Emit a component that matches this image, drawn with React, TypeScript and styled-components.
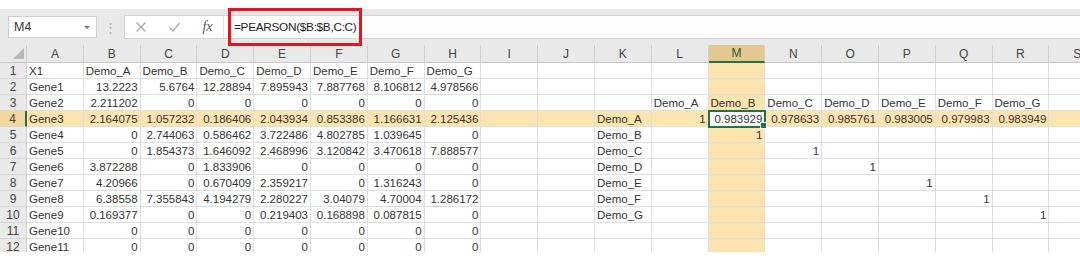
import React from "react";
import styled, { createGlobalStyle, css } from "styled-components";

const GlobalStyle = createGlobalStyle`
  html, body {
    margin: 0;
    padding: 0;
    background: #fff;
  }
  body {
    font-family: "Liberation Sans", "Noto Sans CJK SC", Arial, sans-serif;
  }
`;

const Page = styled.div`
  position: relative;
  width: 1080px;
  height: 265px;
  padding-top: 9px;
  box-sizing: border-box;
  overflow: hidden;
  background: #fff;
`;

const FormulaBar = styled.div`
  display: flex;
  align-items: center;
  height: 36px;
  padding-left: 8px;
  box-sizing: border-box;
  background: #e9e9e9;
`;

const NameBox = styled.div`
  display: flex;
  align-items: center;
  justify-content: space-between;
  width: 89px;
  height: 22px;
  padding: 0 6px 0 5px;
  box-sizing: border-box;
  background: #fff;
  border: 1px solid #cfcfcf;
  font-size: 12.5px;
  color: #333;
`;

const Caret = styled.span`
  width: 0;
  height: 0;
  border-left: 3px solid transparent;
  border-right: 3px solid transparent;
  border-top: 3px solid #777;
`;

const Grip = styled.div`
  width: 27px;
  text-align: center;
  color: #b4b4b4;
  font-size: 13px;
`;

const FormulaBox = styled.div`
  flex: 1;
  display: flex;
  align-items: stretch;
  height: 22px;
  background: #fdfdfd;
  border: 1px solid #d3d3d3;
  border-right: none;
`;

const IconGroup = styled.div`
  display: flex;
  align-items: center;
  justify-content: space-around;
  width: 98px;
  background: #fff;
  border-right: 1px solid #e2e2e2;
`;

const Fx = styled.span`
  font-family: "Liberation Serif", "Times New Roman", serif;
  font-style: italic;
  font-size: 14px;
  color: #555;
`;

const FormulaText = styled.div`
  display: flex;
  align-items: center;
  padding-left: 10px;
  font-size: 11.8px;
  letter-spacing: -0.3px;
  color: #222;
`;

const Callout = styled.div`
  position: absolute;
  left: 228px;
  top: 8px;
  width: 134px;
  height: 38px;
  box-sizing: border-box;
  border: 3px solid #e8141b;
  pointer-events: none;
`;

const Sheet = styled.div`
  display: grid;
  grid-template-columns: 27px repeat(19, 56.8px);
  grid-template-rows: 18px;
  grid-auto-rows: 16px;
  height: 207px;
  overflow: hidden;
  font-size: 11.5px;
  color: #333;
`;

const Corner = styled.div`
  display: flex;
  align-items: flex-end;
  justify-content: flex-end;
  padding: 0 2px 3px 0;
  background: #e9e9e9;
  border-right: 1px solid #d0d0d0;
  border-bottom: 1px solid #c8c8c8;
`;

const ColHead = styled.div<{ $active?: boolean }>`
  display: flex;
  align-items: center;
  justify-content: center;
  box-sizing: border-box;
  background: #e9e9e9;
  border-right: 1px solid #d0d0d0;
  border-bottom: 1px solid #c8c8c8;
  font-size: 12px;
  color: #444;
  ${({ $active }) =>
    $active &&
    css`
      background: #e5c88d;
      border-bottom: 2px solid #217346;
      color: #2c5a3b;
    `}
`;

const RowHead = styled.div<{ $active?: boolean }>`
  display: flex;
  align-items: center;
  justify-content: center;
  box-sizing: border-box;
  background: #e9e9e9;
  border-right: 1px solid #d0d0d0;
  border-bottom: 1px solid #d6d6d6;
  font-size: 12px;
  color: #444;
  ${({ $active }) =>
    $active &&
    css`
      background: #f4d79d;
      border-right: 2px solid #217346;
    `}
`;

const Cell = styled.div<{ $num?: boolean; $hl?: boolean; $selected?: boolean }>`
  position: relative;
  display: flex;
  align-items: center;
  justify-content: ${({ $num }) => ($num ? "flex-end" : "flex-start")};
  padding: 0 2px;
  box-sizing: border-box;
  white-space: nowrap;
  overflow: visible;
  background: ${({ $hl }) => ($hl ? "#fde3ae" : "#fff")};
  border-right: 1px solid #dedede;
  border-bottom: 1px solid #dedede;
  ${({ $selected }) =>
    $selected &&
    css`
      z-index: 1;
      background: #fff;
      outline: 2px solid #217346;
      outline-offset: -1px;
      &::after {
        content: "";
        position: absolute;
        right: -3px;
        bottom: -3px;
        width: 5px;
        height: 5px;
        background: #217346;
        border: 1px solid #fff;
      }
    `}
`;

const COLS = "ABCDEFGHIJKLMNOPQRS".split("");
const ACTIVE_COL = "M";
const ACTIVE_ROW = 4;

const demos = ["Demo_A", "Demo_B", "Demo_C", "Demo_D", "Demo_E", "Demo_F", "Demo_G"];

const genes: string[][] = [
  ["X1", ...demos],
  ["Gene1", "13.2223", "5.6764", "12.28894", "7.895943", "7.887768", "8.106812", "4.978566"],
  ["Gene2", "2.211202", "0", "0", "0", "0", "0", "0"],
  ["Gene3", "2.164075", "1.057232", "0.186406", "2.043934", "0.853386", "1.166631", "2.125436"],
  ["Gene4", "0", "2.744063", "0.586462", "3.722486", "4.802785", "1.039645", "0"],
  ["Gene5", "0", "1.854373", "1.646092", "2.468996", "3.120842", "3.470618", "7.888577"],
  ["Gene6", "3.872288", "0", "1.833906", "0", "0", "0", "0"],
  ["Gene7", "4.20966", "0", "0.670409", "2.359217", "0", "1.316243", "0"],
  ["Gene8", "6.38558", "7.355843", "4.194279", "2.280227", "3.04079", "4.70004", "1.286172"],
  ["Gene9", "0.169377", "0", "0", "0.219403", "0.168898", "0.087815", "0"],
  ["Gene10", "0", "0", "0", "0", "0", "0", "0"],
  ["Gene11", "0", "0", "0", "0", "0", "0", "0"],
];

const corr = ["1", "0.983929", "0.978633", "0.985761", "0.983005", "0.979983", "0.983949"];

const buildRows = () => {
  const rows: Record<string, string>[] = genes.map((vals) => {
    const r: Record<string, string> = {};
    vals.forEach((v, i) => (r[COLS[i]] = v));
    return r;
  });
  // correlation matrix at K3:R10
  demos.forEach((d, i) => (rows[2][COLS[11 + i]] = d));
  corr.forEach((v, i) => (rows[3][COLS[11 + i]] = v));
  demos.forEach((d, i) => {
    rows[3 + i][COLS[10]] = d;
    if (i > 0) rows[3 + i][COLS[11 + i]] = "1";
  });
  return rows;
};

const rows = buildRows();
const isNum = (v: string) => v !== "" && !isNaN(Number(v));

const CrossIcon = () => (
  <svg width="12" height="12" viewBox="0 0 12 12">
    <path d="M1.5 1.5 L10.5 10.5 M10.5 1.5 L1.5 10.5" stroke="#a8a8a8" strokeWidth="1.2" />
  </svg>
);

const CheckIcon = () => (
  <svg width="13" height="12" viewBox="0 0 13 12">
    <path d="M1.5 6.5 L5 10 L11.5 2" fill="none" stroke="#a8a8a8" strokeWidth="1.2" />
  </svg>
);

const SelectAll = () => (
  <svg width="11" height="11" viewBox="0 0 11 11">
    <polygon points="11,0 11,11 0,11" fill="#b9b9b9" />
  </svg>
);

export default function App() {
  return (
    <Page>
      <GlobalStyle />
      <FormulaBar>
        <NameBox>
          <span>M4</span>
          <Caret />
        </NameBox>
        <Grip>⋮</Grip>
        <FormulaBox>
          <IconGroup>
            <CrossIcon />
            <CheckIcon />
            <Fx>fx</Fx>
          </IconGroup>
          <FormulaText>=PEARSON($B:$B,C:C)</FormulaText>
        </FormulaBox>
      </FormulaBar>
      <Callout />
      <Sheet>
        <Corner>
          <SelectAll />
        </Corner>
        {COLS.map((c) => (
          <ColHead key={c} $active={c === ACTIVE_COL}>
            {c}
          </ColHead>
        ))}
        {rows.map((row, ri) => {
          const n = ri + 1;
          return (
            <React.Fragment key={n}>
              <RowHead $active={n === ACTIVE_ROW}>{n}</RowHead>
              {COLS.map((c) => {
                const v = row[c] ?? "";
                return (
                  <Cell
                    key={c}
                    $num={isNum(v)}
                    $hl={n === ACTIVE_ROW || c === ACTIVE_COL}
                    $selected={n === ACTIVE_ROW && c === ACTIVE_COL}
                  >
                    {v}
                  </Cell>
                );
              })}
            </React.Fragment>
          );
        })}
      </Sheet>
    </Page>
  );
}
